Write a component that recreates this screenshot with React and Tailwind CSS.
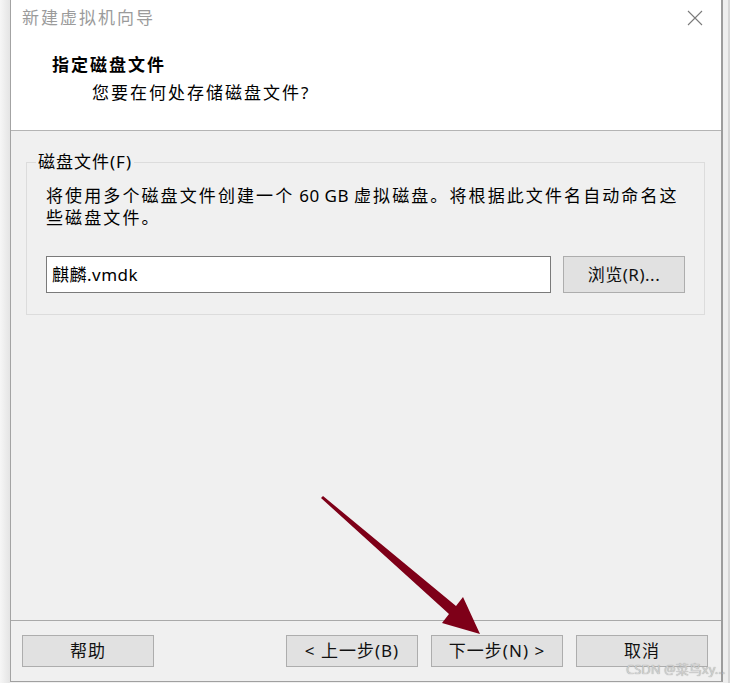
import React from "react";

const font = { fontFamily: '"Noto Sans", "Noto Sans CJK SC", sans-serif' };

function Btn({ children, className = "" }) {
  return (
    <div
      className={`w-[132px] h-[32px] flex items-center justify-center bg-[#e1e1e1] border border-[#adadad] text-[17px] tracking-[1px] text-[#111] ${className}`}
    >
      {children}
    </div>
  );
}

export default function App() {
  return (
    <div className="relative w-[730px] h-[683px] overflow-hidden bg-[#f0f0f0] flex" style={font}>
      {/* left outside strip */}
      <div className="w-[10px] h-full bg-gradient-to-r from-[#f6f6f6] to-[#e4e4e4]" />
      {/* dialog */}
      <div className="w-[713px] h-[682px] flex flex-col border-l border-[#a3a3a3] border-r-2 border-r-[#9c9c9c] border-b border-b-[#a0a0a0]">
        {/* header */}
        <div className="relative h-[131px] bg-white border-b border-[#b4b4b4] pl-[11px] pt-[7px] flex flex-col">
          <div className="h-[22px] leading-[22px] text-[17px] tracking-[2px] text-[#9b9b9b]">新建虚拟机向导</div>
          <div className="absolute right-[16px] top-[8px] w-[20px] h-[20px]">
            <svg width="20" height="20" viewBox="0 0 20 20">
              <path d="M3 3 L17 17 M17 3 L3 17" stroke="#7a7a7a" strokeWidth="1.1" fill="none" />
            </svg>
          </div>
          <div className="mt-[25px] pl-[30px] h-[22px] leading-[22px] text-[17px] tracking-[2px] font-bold text-black">指定磁盘文件</div>
          <div className="mt-[6px] pl-[70px] h-[22px] leading-[22px] text-[17px] tracking-[2px] text-black">您要在何处存储磁盘文件?</div>
        </div>
        {/* body */}
        <div className="h-[490px] bg-[#f0f0f0] border-b border-[#a9a9a9] pt-[31px] pl-[15px]">
          <div className="relative w-[679px] h-[153px] border border-[#dcdcdc] pt-[22px] pl-[19px]">
            <div className="absolute left-[9px] top-[-12px] px-[2px] bg-[#f0f0f0] h-[22px] leading-[22px] text-[17px] tracking-[1px] text-black">
              磁盘文件(F)
            </div>
            <div className="w-[645px] text-[17px] leading-[22px] tracking-[2.1px] text-black">
              将使用多个磁盘文件创建一个<span className="tracking-[0.5px]"> 60 GB </span>虚拟磁盘。将根据此文件名自动命名这些磁盘文件。
            </div>
            <div className="mt-[27px] flex items-center gap-[12px]">
              <div className="w-[505px] h-[37px] bg-white border border-[#7a7a7a] flex items-center pl-[5px] text-[17px] tracking-[0.5px] text-black">
                麒麟.vmdk
              </div>
              <div className="w-[122px] h-[37px] flex items-center justify-center bg-[#e1e1e1] border border-[#adadad] text-[17px] tracking-[0.5px] text-[#111]">
                浏览(R)...
              </div>
            </div>
          </div>
        </div>
        {/* footer */}
        <div className="h-[58px] bg-[#f0f0f0] pt-[14px] pl-[11px] pr-[13px] flex items-start">
          <Btn>帮助</Btn>
          <div className="ml-auto flex gap-[13px]">
            <Btn>&lt; 上一步(B)</Btn>
            <Btn>下一步(N) &gt;</Btn>
            <Btn>取消</Btn>
          </div>
        </div>
      </div>
      {/* right outside strip */}
      <div className="flex-1 h-full bg-[#eeeeee] border-r-2 border-[#d6d6d6]" />

      {/* annotation arrow */}
      <svg className="absolute left-0 top-0 pointer-events-none" width="730" height="683" viewBox="0 0 730 683">
        <polygon
          points="321,498 449,614 442,623 480,634 463,597 456,606 323,496"
          fill="#7e0018"
        />
      </svg>
      {/* watermark */}
      <div
        className="absolute left-[626px] top-[660px] text-[13px] leading-[18px] text-[#d2d2d2] whitespace-nowrap"
        style={{ textShadow: "0 0 1px #8a8a8a" }}
      >
        CSDN @菜鸟xy...
      </div>
    </div>
  );
}
